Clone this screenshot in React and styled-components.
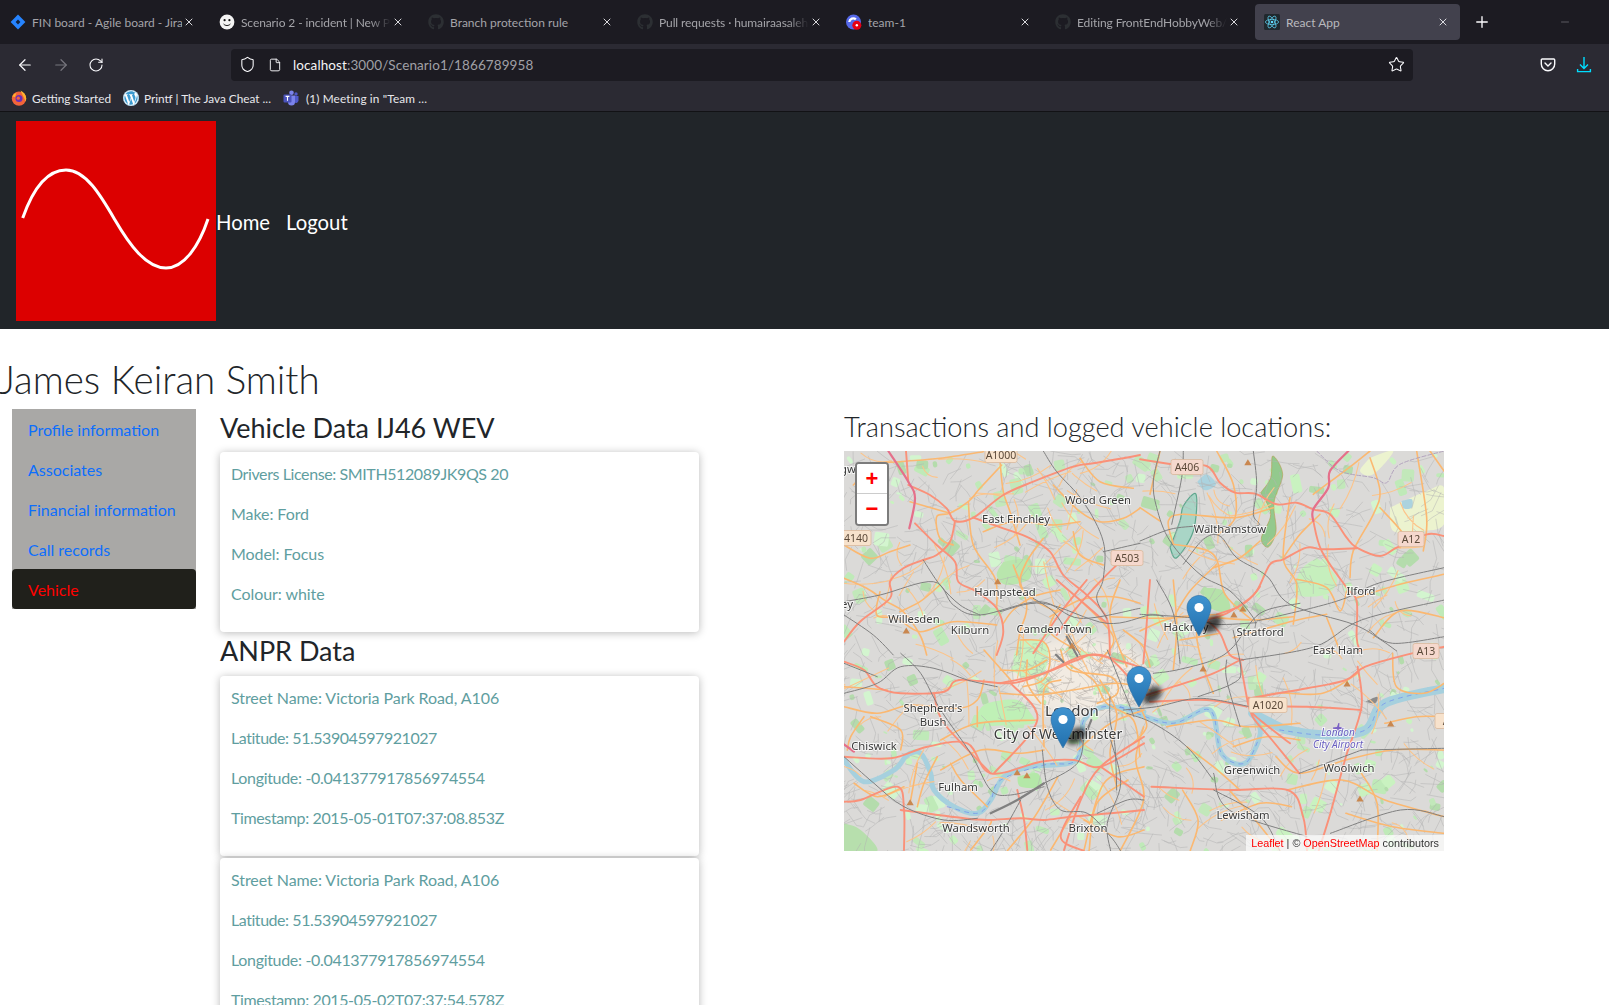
import React from "react";
import styled, { createGlobalStyle } from "styled-components";
import { ArrowLeft, ArrowRight, RotateCw, Shield, File, Star, Plus, X, Minus } from "lucide-react";
import { FaGithub, FaWordpress } from "react-icons/fa";

const UI = `Lato, "Open Sans", "Liberation Sans", sans-serif`;
const Global = createGlobalStyle`
  html, body { margin: 0; padding: 0; background: #fff; height: 100%; overflow: hidden; }
  * { box-sizing: border-box; }
  body { font-family: ${UI}; font-size: 16px; color: #212529; }
`;
const Page = styled.div`width: 1609px; height: 1005px; overflow: hidden;`;

/* ---------- browser chrome ---------- */
const TabStrip = styled.div`height: 44px; background: #1c1b22; display: flex; align-items: center; padding-left: 1px; gap: 4px;`;
const Tab = styled.div`
  width: 205px; height: 36px; border-radius: 4px; display: flex; align-items: center; padding: 0 8px 0 9px; flex: none;
  background: ${p => (p.$active ? "#42414d" : "transparent")};
`;
const TabIcon = styled.span`width: 16px; height: 16px; flex: none; display: flex; align-items: center; justify-content: center; margin-right: 6px;`;
const TabTitle = styled.span`
  flex: 1; min-width: 0; font-size: 12px; color: ${p => (p.$active ? "#b9b9be" : "#a4a4a9")}; white-space: nowrap; overflow: hidden;
  ${p => p.$fade && `letter-spacing: -0.1px; -webkit-mask-image: linear-gradient(to right, #000 86%, transparent 100%); mask-image: linear-gradient(to right, #000 86%, transparent 100%);`}
`;
const TabClose = styled.span`width: 14px; display: flex; justify-content: center; color: #eeeef2; flex: none; margin-right: 2px;`;
const NewTab = styled.span`margin-left: 9px; color: #fbfbfe; display: flex;`;
const WinControl = styled.span`margin-left: 64px; color: #9a9aa0; display: flex;`;

const Toolbar = styled.div`height: 41px; background: #2b2a33; display: flex; align-items: center; position: relative; padding-left: 16px;`;
const NavIcon = styled.span`width: 36px; display: flex; color: ${p => (p.$dim ? "#77767e" : "#fbfbfe")};`;
const UrlBar = styled.div`
  margin-left: 107px; width: 1182px; height: 32px; background: #1c1b22; border-radius: 4px; display: flex; align-items: center; padding: 0 8px 0 8px; color: #fbfbfe;
`;
const UrlIconSlot = styled.span`width: ${p => p.$w}px; display: flex; flex: none;`;
const UrlText = styled.span`flex: 1; font-size: 13.5px; color: #a0a0a6; letter-spacing: 0.1px;
  b { font-weight: 400; color: #f4f4f6; }`;
const ToolRight = styled.div`display: flex; align-items: center; gap: 20px; margin-left: 127px;`;

const Bookmarks = styled.div`height: 27px; background: #2b2a33; border-bottom: 1px solid #121215; display: flex; align-items: center; padding-left: 11px;`;
const Bookmark = styled.span`display: flex; align-items: center; color: #e8e8ec; font-size: 11.8px; gap: ${p => (p.$wide ? 7 : 5)}px; margin-right: 12px; white-space: nowrap; letter-spacing: ${p => (p.$wide ? "0.15px" : "0")};`;

/* ---------- app ---------- */
const NavBar = styled.nav`height: 217px; background: #212529; display: flex; align-items: center; padding: 0 16px;`;
const NavLink = styled.a`color: #fff; font-size: 20.3px; margin-right: 16px; margin-top: 2px;`;
const Title = styled.h1`margin: 0 0 0 -1px; height: 80px; padding-top: 26px; font-size: 38.5px; line-height: 48px; font-weight: 300; color: #212529; white-space: nowrap;`;
const Content = styled.div`display: flex; align-items: flex-start; padding-left: 12px;`;
const SideNav = styled.div`width: 184px; flex: none; background: #a9a8a6; display: flex; flex-direction: column;`;
const SideItem = styled.a`
  height: 40px; line-height: 42px; padding-left: 16px; font-size: 16px; border-radius: ${p => (p.$active ? "4px" : "0")};
  color: ${p => (p.$active ? "#ff0000" : "#0d6efd")}; background: ${p => (p.$active ? "#20201b" : "transparent")};
`;
const DataCol = styled.div`width: 479px; margin-left: 24px; flex: none; padding-top: 2px;`;
const SectionTitle = styled.h3`margin: 0; height: ${p => p.$h || 41}px; font-size: 27px; line-height: 34px; font-weight: 400; color: #212529; white-space: nowrap;`;
const Card = styled.div`background: #fff; border-radius: 4px; padding: 10px 11px; height: 180px; margin-bottom: 2px; box-shadow: 0 1px 9px rgba(0,0,0,.28);`;
const CardLine = styled.p`margin: 0 0 16px; height: 24px; line-height: 24px; color: #5f9ea0; font-size: 16px; letter-spacing: ${p => p.$ls ?? -0.07}px; white-space: nowrap;`;
const MapCol = styled.div`width: 600px; margin-left: 145px; flex: none;`;
const MapTitle = styled.h3`margin: 0; height: 42px; font-size: 27.2px; line-height: 36px; font-weight: 300; color: #212529; white-space: nowrap;`;
const MapFrame = styled.div`position: relative; width: 600px; height: 400px; overflow: hidden; background: #d8d7d5;`;
const ZoomBar = styled.div`position: absolute; left: 11px; top: 11px; width: 34px; border: 2px solid #7c7c7c; border-radius: 4px; background: #fff; overflow: hidden;`;
const ZoomBtn = styled.a`display: block; height: 30px; background: #fff; color: #f00; font: 700 22px/30px "Liberation Sans", sans-serif; text-align: center;
  ${p => p.$top && "border-bottom: 1px solid #ccc;"}`;
const Attribution = styled.div`position: absolute; right: 0; bottom: 0; background: rgba(255,255,255,.7); padding: 0 5px; font: 10.8px/16px "Liberation Sans", sans-serif; color: #333;
  a { color: #f00; }`;
const MapSvg = styled.svg`display: block; width: 600px; height: 400px;`;
const PlaceLabel = styled.text`
  font-family: "Noto Sans", "Open Sans", sans-serif; font-size: ${p => p.$s || 11.3}px; fill: #3a3a3a; text-anchor: middle; dominant-baseline: middle;
  paint-order: stroke; stroke: rgba(255,255,255,.75); stroke-width: 2px;
  ${p => p.$air && "fill:#6a5fc0; font-style: italic; font-size: 10px;"}
`;
const ShieldText = styled.text`font-family: "Noto Sans", "Open Sans", sans-serif; font-size: 10.5px; fill: #5a4838; text-anchor: middle; dominant-baseline: central;`;

/* ---------- map data: coordinates read from crops of the reference ---------- */
const A = ps => ps.map(([x, y]) => [x / 3 - 4, y / 3 - 6]);
const B = ps => ps.map(([x, y]) => [x / 3 + 156, y / 3 + 129]);
const C = ps => ps.map(([x, y]) => [x / 3 + 296, y / 3]);
const D = ps => ps.map(([x, y]) => [x / 3, y / 3 + 199]);
const E = ps => ps.map(([x, y]) => [(x - 10) / 2.57, (y - 33) / 3]);

const smooth = pts => {
  let d = `M${pts[0][0].toFixed(1)} ${pts[0][1].toFixed(1)}`;
  for (let i = 0; i < pts.length - 1; i++) {
    const p0 = pts[i - 1] || pts[i], p1 = pts[i], p2 = pts[i + 1], p3 = pts[i + 2] || p2;
    d += `C${(p1[0] + (p2[0] - p0[0]) / 6).toFixed(1)} ${(p1[1] + (p2[1] - p0[1]) / 6).toFixed(1)} ${(p2[0] - (p3[0] - p1[0]) / 6).toFixed(1)} ${(p2[1] - (p3[1] - p1[1]) / 6).toFixed(1)} ${p2[0].toFixed(1)} ${p2[1].toFixed(1)}`;
  }
  return d;
};

const SALMON = [
  A([[205,120],[270,150],[320,190],[345,228],[400,218],[490,150],[580,110],[700,65],[760,55],[850,40],[900,30]]),
  A([[198,18],[205,110]]),
  A([[345,228],[330,290],[290,330],[250,345],[190,370],[150,410],[150,460],[60,530],[12,590]]),
  A([[225,235],[290,300],[345,350],[355,410],[410,440],[470,490],[490,560],[470,630]]),
  A([[400,218],[490,250],[570,280],[630,320],[670,390],[740,450],[800,520],[810,630]]),
  A([[830,360],[780,410],[700,500],[650,570]]),
  B([[0,310],[130,280],[240,230],[320,230],[385,290]]),
  B([[440,345],[520,320],[640,280],[720,240]]),
  B([[450,365],[620,360],[740,380]]),
  B([[720,240],[740,350],[750,390],[780,420],[870,490]]),
  B([[620,120],[660,160],[690,225],[730,240]]),
  B([[620,120],[680,100],[750,55],[780,20]]),
  B([[450,0],[440,130],[430,250]]),
  B([[260,0],[180,100],[100,220]]),
  B([[170,0],[240,60],[320,130]]),
  C([[0,25],[100,40],[200,45],[240,95],[285,125],[345,128],[410,160],[470,155],[520,175],[570,190],[620,260],[650,290],[720,315],[770,290],[860,250],[912,255]]),
  C([[520,210],[545,300],[620,410],[650,450],[650,560],[660,600]]),
  C([[230,490],[300,465],[350,420],[390,340],[430,325],[500,290],[550,295],[650,292]]),
  D([[0,35],[60,60],[100,110],[170,130],[300,125],[345,90],[500,100],[600,70],[700,30],[760,15],[900,55]]),
  D([[0,320],[140,325],[250,290],[370,280],[440,370],[590,335],[690,330],[770,350],[900,280]]),
  D([[900,260],[770,350],[710,450],[660,600]]),
  D([[0,455],[50,450],[160,410],[180,480],[180,600]]),
  D([[170,480],[360,505],[430,510],[530,505],[600,510],[680,500],[800,490],[900,480]]),
  D([[500,100],[580,210],[450,370]]),
  D([[270,130],[300,220],[440,370]]),
  D([[520,420],[540,510],[550,600]]),
  D([[770,350],[900,440]]),
  D([[710,440],[650,560],[720,603]]),
  E([[1050,775],[1200,745],[1300,720],[1350,680],[1470,640],[1553,620]]),
  E([[1050,800],[1200,800],[1340,810]]),
  E([[800,1040],[1000,1050],[1150,1050],[1190,1130],[1200,1232]]),
  E([[1050,775],[1060,830],[1110,900],[1180,1000]]),
  E([[1330,680],[1340,800],[1300,950],[1260,1120],[1230,1232]]),
];
const ORANGE = [
  A([[480,50],[490,140],[510,200],[540,300]]), A([[385,170],[400,300],[465,400],[470,490]]),
  A([[210,170],[330,205]]), A([[485,60],[420,130],[385,170],[330,205],[290,215],[300,280],[340,300]]),
  A([[640,120],[720,200],[780,230],[850,220],[900,190]]), A([[700,260],[720,330],[790,360]]),
  A([[12,400],[80,430],[140,470],[190,500],[240,570],[260,630]]), A([[40,120],[100,60],[180,50],[300,40],[430,20]]),
  A([[610,280],[560,350],[540,420],[590,470],[650,500]]), A([[720,40],[780,110],[880,130]]),
  A([[430,260],[520,230],[640,240],[720,230]]), A([[12,300],[90,340],[150,320],[210,300]]),
  A([[120,440],[110,510],[170,520],[240,560],[340,530],[470,540]]), A([[520,360],[560,480],[540,560],[530,630]]),
  A([[300,420],[240,470],[180,500]]), A([[660,480],[630,560],[720,620]]),
  B([[330,110],[480,115],[600,110],[760,120],[880,110]]), B([[0,270],[80,270],[140,240]]),
  B([[60,180],[130,185],[150,240],[130,300],[70,320]]), B([[520,0],[530,140],[520,270]]),
  B([[600,110],[590,170],[610,260],[640,340]]), B([[370,150],[430,200],[450,260]]),
  B([[540,180],[600,170],[660,160]]), B([[0,340],[110,345],[220,330],[350,310],[450,330]]),
  B([[300,300],[350,400],[330,520],[350,620]]), B([[420,380],[440,440],[400,490]]),
  B([[500,440],[640,420],[740,440],[900,430]]), B([[700,500],[800,470],[900,480]]),
  B([[240,60],[340,170],[300,240]]), B([[150,110],[240,60],[340,50],[420,70]]),
  B([[360,0],[330,110],[380,260]]), B([[10,130],[40,90],[100,50],[180,30]]),
  B([[200,250],[280,300],[320,370],[400,420],[420,530]]), B([[560,500],[640,560],[720,630]]),
  C([[230,0],[280,100],[285,200],[235,250]]), C([[450,140],[430,320],[470,400],[460,520]]),
  C([[520,130],[640,40],[690,0]]), C([[690,20],[720,120],[700,190],[640,300],[630,380]]),
  C([[100,280],[85,210],[130,190],[285,200],[400,170]]), C([[100,280],[220,310],[255,430],[340,510]]),
  C([[0,540],[100,500],[250,490]]), C([[360,270],[300,320],[220,350]]), C([[470,385],[560,410],[600,480],[620,420]]),
  C([[650,440],[780,400],[912,370]]), C([[280,560],[460,510],[560,490]]), C([[700,560],[780,480],[912,500]]),
  C([[540,190],[480,250],[430,320]]), C([[30,130],[60,0]]), C([[0,170],[60,210]]), C([[720,170],[790,250],[780,290]]),
  C([[870,0],[912,60]]), C([[230,340],[150,420],[100,500]]), C([[560,500],[600,600]]), C([[850,300],[860,200],[830,0]]),
  D([[0,170],[100,190],[200,165],[340,175],[400,150],[420,90]]), D([[290,270],[400,220],[580,210]]),
  D([[290,360],[410,300],[520,310],[600,300]]), D([[200,450],[220,340]]), D([[320,340],[350,390],[430,470]]),
  D([[600,290],[600,120],[650,90]]), D([[60,200],[20,260],[10,300]]), D([[30,400],[100,440],[180,410]]),
  D([[700,300],[800,220],[900,180]]), D([[720,600],[780,400],[900,350]]), D([[550,30],[550,100],[590,160]]),
  D([[650,0],[680,60],[800,80],[820,130],[760,160]]), D([[420,0],[500,90]]), D([[400,170],[400,230]]),
  D([[0,110],[130,120]]), D([[80,200],[170,240],[170,300]]), D([[280,320],[240,400],[220,470]]),
  D([[380,600],[440,520],[430,510]]), D([[620,600],[680,500]]), D([[720,510],[820,560],[900,540]]),
  E([[780,860],[760,960],[780,1080],[720,1232]]), E([[880,1050],[920,1140],[900,1232]]),
  E([[1150,1050],[1290,1020],[1400,1080],[1553,1130]]), E([[1050,790],[1120,760],[1240,760],[1330,700]]),
  E([[1120,950],[1180,1000],[1300,960],[1420,930],[1553,930]]), E([[1400,850],[1480,830],[1553,830]]),
  E([[1340,1000],[1380,1090],[1380,1232]]), E([[1000,1050],[1060,1130],[1130,1232]]),
  E([[1420,640],[1430,740],[1500,760],[1553,730]]), E([[1300,1120],[1420,1160],[1553,1180]]),
  E([[980,1140],[1080,1090],[1160,1100]]), E([[640,1232],[660,1090],[740,1020]]), E([[430,1232],[500,1130],[560,1010]]),
];
const RAIL = [
  A([[610,18],[650,80],[730,170],[790,290],[790,400],[770,460],[800,520]]),
  A([[12,470],[120,450],[280,410],[340,480],[420,510],[600,470],[720,520],[900,490]]),
  A([[790,320],[900,295]]), A([[580,460],[640,500],[680,560],[720,630]]), A([[12,510],[100,570],[160,630]]),
  A([[250,345],[300,420],[360,480],[420,510]]),
  B([[0,95],[130,70],[320,130],[450,105],[490,110]]), B([[460,280],[530,270],[640,240],[700,200],[780,100],[900,70]]),
  B([[370,390],[470,380],[600,355],[750,380]]), B([[380,400],[460,430],[560,500],[640,600]]),
  B([[470,0],[520,100],[540,250]]), B([[330,350],[330,420],[345,500],[350,630]]), B([[680,240],[680,300],[720,440]]),
  C([[60,0],[40,90],[50,170],[90,270],[180,370],[270,420],[340,500],[345,530]]), C([[130,0],[125,80],[95,220]]),
  C([[0,270],[90,235],[170,225]]), C([[340,0],[350,100],[340,190],[350,225],[200,225]]),
  C([[130,340],[190,265],[240,255],[290,320],[380,375],[450,460],[640,520],[720,565],[770,600]]),
  C([[350,510],[520,470],[620,440],[720,395],[912,350]]), C([[0,490],[150,500],[230,520],[350,515]]),
  D([[0,130],[100,100],[170,50],[270,55],[370,90],[460,110]]), D([[170,10],[230,70],[290,180],[380,310],[440,420],[500,435],[600,410]]),
  D([[595,300],[610,410],[650,480],[730,490],[800,560],[830,603]]), D([[800,270],[830,400],[790,520],[800,603]]),
  D([[760,490],[850,450],[900,450]]), D([[440,603],[480,540],[530,450]]), D([[790,0],[870,200]]),
  D([[0,40],[100,80]]), D([[0,320],[90,400],[180,470],[300,510],[400,505]]),
  D([[600,400],[700,340],[720,250]]),
  E([[1030,660],[1220,620],[1340,540],[1553,480]]), E([[1360,570],[1420,610],[1553,590]]), E([[1340,930],[1553,925]]),
  E([[960,1000],[1000,1110],[1200,1190]]), E([[1010,570],[1030,690],[1010,730],[920,770]]), E([[1180,1000],[1340,930]]),
  E([[1130,1232],[1080,1130],[960,1050]]), E([[1260,1180],[1440,1110],[1553,1130]]),
];
const THICK = [
  D([[440,490],[520,450],[600,400]]),
  D([[730,240],[742,210]]),
  B([[200,170],[232,228]]), B([[168,224],[190,246]]),
];
const THAMES = [
  D([[0,330],[60,395],[150,360],[190,315],[230,310],[260,370],[270,420],[330,470],[400,490],[440,450],[480,380],[560,350],[690,335],[715,260],[720,210],[780,170],[900,185]]),
  E([[720,800],[850,850],[950,810],[980,940],[1040,970],[1080,880],[1060,820]]),
];
const THAMES_WIDE = [E([[1060,820],[1110,850],[1150,870],[1250,885],[1350,870],[1400,790],[1553,745]])];
const BLUE_DASH = [
  D([[310,470],[400,490],[440,450],[470,390],[600,345],[690,335],[715,260],[720,210],[780,170],[900,185]]),
  E([[720,800],[850,850],[950,810],[980,940],[1040,970],[1075,900]]),
  E([[1130,870],[1240,885],[1350,870],[1400,790],[1553,745]]),
];
const PEAKS = [[405,425],[170,573],[596,618],[933,687],[1012,525],[1035,507],[1303,732],[1415,852],[455,998],[480,1007],[180,1088],[1336,1077],[1048,68]]
  .map(([x, y]) => E([[x, y]])[0]);
const LABELS = [
  ["Wood Green",254,50],["East Finchley",172,69],["Walthamstow",386,79],["Hampstead",161,142],["Ilford",517,141],
  ["Willesden",70,169],["Kilburn",126,180],["Camden Town",210,179],["Hackney",342,177],["Stratford",416,182],["East Ham",494,200],
  ["Shepherd's",89,258],["Bush",89,272],["Chiswick",30,296],["Greenwich",408,320],["Woolwich",505,318],["Fulham",114,337],
  ["Lewisham",399,365],["Wandsworth",132,378],["Brixton",244,378],["ey",3,154],["gw",4,19],
];
const SHIELDS = [["A1000",157,4,32,"#f7e2cc"],["A406",343,16,32,"#f5d8cd"],["4140",12,87,30,"#f7e2cc"],["A12",567,88,26,"#f5d8cd"],["A503",283,107,32,"#f5d8cd"],["A13",582,200,26,"#f5d8cd"],["A1020",424,254,38,"#f7e2cc"],["A",602,270,22,"#f7e2cc"]];
const PINS = [[355,185],[295,256],[219,297]];

const rng = (s => () => { s |= 0; s = s + 0x6d2b79f5 | 0; let t = Math.imul(s ^ s >>> 15, 1 | s); t = t + Math.imul(t ^ t >>> 7, 61 | t) ^ t; return ((t ^ t >>> 14) >>> 0) / 4294967296; })(1866789958);

const patches = Array.from({ length: 420 }, () => {
  const x = rng() * 600, y = rng() * 400, r = 3 + rng() * 9, a = rng() * 90;
  const c = ["#c9f2c0", "#bfeab8", "#d3f5cf", "#b4dcac", "#c2e8ba"][Math.floor(rng() * 5)];
  return { x, y, w: r * (0.7 + rng()), h: r * (0.5 + rng() * 0.7), a, c };
});
const streets = Array.from({ length: 1300 }, () => {
  const x = rng() * 600, y = rng() * 400, a = rng() * Math.PI, l = 6 + rng() * 16;
  const a2 = a + (rng() - 0.5) * 1.6, l2 = 4 + rng() * 10;
  const x1 = x + Math.cos(a) * l, y1 = y + Math.sin(a) * l;
  return `M${x.toFixed(1)} ${y.toFixed(1)}L${x1.toFixed(1)} ${y1.toFixed(1)}L${(x1 + Math.cos(a2) * l2).toFixed(1)} ${(y1 + Math.sin(a2) * l2).toFixed(1)}`;
}).join("");
const cityStreets = Array.from({ length: 260 }, () => {
  const x = 170 + rng() * 130, y = 190 + rng() * 70, a = rng() * Math.PI, l = 4 + rng() * 10;
  return `M${x.toFixed(1)} ${y.toFixed(1)}L${(x + Math.cos(a) * l).toFixed(1)} ${(y + Math.sin(a) * l).toFixed(1)}`;
}).join("");
const minorOrange = Array.from({ length: 130 }, () => {
  const x = rng() * 600, y = rng() * 400, a = rng() * Math.PI * 2, l = 18 + rng() * 34;
  const bend = (rng() - 0.5) * 18;
  const mx = x + Math.cos(a) * l / 2 - Math.sin(a) * bend, my = y + Math.sin(a) * l / 2 + Math.cos(a) * bend;
  return `M${x.toFixed(1)} ${y.toFixed(1)}Q${mx.toFixed(1)} ${my.toFixed(1)} ${(x + Math.cos(a) * l).toFixed(1)} ${(y + Math.sin(a) * l).toFixed(1)}`;
}).join("");

const Lines = ({ list, color, w, ...rest }) => (
  <g fill="none" stroke={color} strokeWidth={w} strokeLinecap="round" strokeLinejoin="round" {...rest}>
    {list.map((p, i) => <path key={i} d={smooth(p)} />)}
  </g>
);

const Pin = ({ x, y }) => (
  <g transform={`translate(${x - 12.5} ${y - 41})`}>
    <path d="M12.5 0.5C5.9 0.5 0.5 5.9 0.5 12.5 0.5 21 12.5 41 12.5 41S24.5 21 24.5 12.5C24.5 5.9 19.1 0.5 12.5 0.5Z" fill="url(#pinFill)" stroke="#2a6ca3" strokeWidth="0.6" />
    <circle cx="12.5" cy="12.5" r="4.6" fill="#fff" />
  </g>
);

const LondonMap = () => (
  <MapSvg viewBox="0 0 600 400">
    <defs>
      <linearGradient id="pinFill" x1="0" y1="0" x2="0" y2="1">
        <stop offset="0" stopColor="#3f93d0" /><stop offset="1" stopColor="#2270ad" />
      </linearGradient>
      <filter id="soft"><feGaussianBlur stdDeviation="0.28" /></filter>
      <filter id="shadow" x="-80%" y="-80%" width="260%" height="260%"><feGaussianBlur stdDeviation="2.8" /></filter>
      <filter id="soft2"><feGaussianBlur stdDeviation="6" /></filter>
    </defs>
    <rect width="600" height="400" fill="#dbdad8" />
    <ellipse cx="235" cy="225" rx="70" ry="40" fill="#f2ebe2" filter="url(#soft2)" />
    <g filter="url(#soft)">
      {patches.map((p, i) => <rect key={i} x={p.x} y={p.y} width={p.w} height={p.h} rx="2" fill={p.c} transform={`rotate(${p.a} ${p.x} ${p.y})`} />)}
      <path d={smooth(D([[400,190],[430,160],[520,150],[560,190],[570,220],[500,225],[420,225],[400,190]]))} fill="#bff0b6" />
      <path d={smooth(D([[520,380],[580,370],[590,410],[530,410],[520,380]]))} fill="#b4e8a8" />
      <path d={smooth(B([[60,180],[130,185],[145,235],[120,290],[60,290],[40,240],[60,180]]))} fill="#c8f3bf" />
      <path d={smooth(A([[490,350],[560,345],[570,400],[500,420],[470,390],[490,350]]))} fill="#b9e6ad" />
      <path d={smooth(C([[190,410],[250,420],[270,480],[210,470],[190,410]]))} fill="#b5e2a9" />
      <path d={smooth(C([[530,320],[590,380],[560,430],[470,430],[480,360],[530,320]]))} fill="#c6efbd" />
      <path d={smooth(C([[750,170],[860,120],[912,110],[912,220],[840,240],[760,240],[750,170]]))} fill="#ecf3cf" />
      <path d={smooth(C([[690,20],[760,0],[700,70],[660,60],[690,20]]))} fill="#ecf3cf" />
      <path d={smooth(D([[0,520],[50,540],[100,603],[0,603],[0,520]]))} fill="#b7dfad" />
      <path d={smooth(C([[362,125],[392,80],[398,15],[428,70],[402,155],[408,240],[385,288],[364,262],[392,190],[362,125]]))} fill="#93c98d" stroke="#b59c4e" strokeWidth="0.6" />
      <path d={smooth(C([[90,290],[120,210],[130,165],[168,130],[160,240],[110,320],[90,290]]))} fill="#a9d5c6" stroke="#5fa68d" strokeWidth="1.2" />
      <path d={smooth(C([[172,92],[200,70],[228,100],[195,118],[172,92]]))} fill="#abd3df" />
      <path d={smooth(C([[785,150],[815,145],[815,170],[790,172],[785,150]]))} fill="#abd3df" />
      <path d={smooth(E([[1350,785],[1380,770],[1375,790],[1350,785]]))} fill="#8c8c8c" />
      <path d={streets} stroke="#b2b2b2" strokeWidth="0.5" fill="none" />
      <path d={cityStreets} stroke="#b0aaa3" strokeWidth="0.45" fill="none" />
      <Lines list={THAMES} color="#a6d0de" w={5} />
      <Lines list={THAMES_WIDE} color="#a6d0de" w={9} />
      <Lines list={BLUE_DASH} color="#7394ee" w={0.8} strokeDasharray="4 5" />
      <path d={minorOrange} stroke="#fcc48a" strokeWidth="1.1" fill="none" strokeLinecap="round" />
      <Lines list={ORANGE} color="#fbb871" w={1.6} />
      <Lines list={SALMON} color="#fa9179" w={1.9} />
      <Lines list={RAIL} color="#808080" w={1} />
      <Lines list={THICK} color="#808080" w={2.2} />
      <Lines list={[C([[625,0],[570,60],[565,110],[520,175],[520,210]]), A([[145,18],[205,110],[225,160],[208,250]]), D([[0,283],[30,305]])]} color="#e56f8a" w={2.2} />
      <Lines list={[C([[530,0],[600,60],[700,80],[740,95],[780,40],[912,0]])]} color="#b2a3bd" w={1} strokeDasharray="4 2" />
      <g fill="#c9874f">
        {PEAKS.map(([x, y], i) => <path key={i} d={`M${x} ${y - 3.5}L${x + 3.6} ${y + 2.5}L${x - 3.6} ${y + 2.5}Z`} />)}
      </g>
      <path d="M490 279l1.4 -4 1-.0 -.2 4 5 .6 0 1.2 -5 .4 .2 4 -1 0 -1.4-4 -4 -.4 0-1.4Z" fill="#7a60c4" transform="translate(3 -3)" />
      <PlaceLabel x="214" y="284" $s={14}>City of Westminster</PlaceLabel>
      <PlaceLabel x="228" y="261" $s={15}>London</PlaceLabel>
      {LABELS.map(([t, x, y]) => <PlaceLabel key={t} x={x} y={y}>{t}</PlaceLabel>)}
      <PlaceLabel x="494" y="282" $air>London</PlaceLabel>
      <PlaceLabel x="494" y="294" $air>City Airport</PlaceLabel>
      {SHIELDS.map(([t, x, y, w, c]) => (
        <g key={t}>
          <rect x={x - w / 2} y={y - 7.5} width={w} height={15} rx="2" fill={c} stroke="#d9b99c" strokeWidth="0.8" />
          <ShieldText x={x} y={y}>{t}</ShieldText>
        </g>
      ))}
    </g>
    {PINS.map(([x, y], i) => (
      <ellipse key={i} cx={x + 13} cy={y - 12} rx="11" ry="7" transform={`rotate(-38 ${x + 13} ${y - 12})`} fill="#000" opacity=".7" filter="url(#shadow)" />
    ))}
    {PINS.map(([x, y], i) => <Pin key={i} x={x} y={y} />)}
  </MapSvg>
);

/* ---------- favicons ---------- */
const JiraIcon = () => (
  <svg width="16" height="16" viewBox="0 0 16 16"><path d="M8 0.6L15.4 8 8 15.4 0.6 8Z" fill="#2684ff" /><path d="M8 5.6L10.4 8 8 10.4 5.6 8Z" fill="#12233f" /></svg>
);
const Smiley = () => (
  <svg width="16" height="16" viewBox="0 0 16 16"><circle cx="8" cy="8" r="7.4" fill="#f4f4f4" /><circle cx="5.6" cy="6.2" r="1.1" fill="#111" /><circle cx="10.4" cy="6.2" r="1.1" fill="#111" /><path d="M4.6 10c1.8 2 5 2 6.8 0" stroke="#111" strokeWidth="1" fill="none" /></svg>
);
const TeamIcon = () => (
  <svg width="17" height="17" viewBox="0 0 17 17"><circle cx="8" cy="8" r="8" fill="#5568e8" /><path d="M3.5 8a4.2 4.2 0 0 1 7-2.8" stroke="#fff" strokeWidth="2.4" fill="none" /><circle cx="11.5" cy="11.5" r="4.8" fill="#e60012" /><circle cx="11.5" cy="11.5" r="1.3" fill="#fff" /></svg>
);
const ReactIcon = () => (
  <svg width="16" height="16" viewBox="0 0 16 16"><rect width="16" height="16" rx="1.5" fill="#20282d" /><g fill="none" stroke="#61dafb" strokeWidth=".7"><ellipse cx="8" cy="8" rx="6.6" ry="2.6" /><ellipse cx="8" cy="8" rx="6.6" ry="2.6" transform="rotate(60 8 8)" /><ellipse cx="8" cy="8" rx="6.6" ry="2.6" transform="rotate(120 8 8)" /></g><circle cx="8" cy="8" r="1.3" fill="#61dafb" /></svg>
);
const FirefoxIcon = () => (
  <svg width="16" height="16" viewBox="0 0 16 16"><circle cx="8" cy="8.6" r="7.2" fill="#f2643a" /><path d="M9.5 0.5c3.5 1.6 5.7 4.6 5.7 8.1 0 1-.2 2-.6 2.8-1.2-3.2-3-6-5.1-10.9Z" fill="#ffb42e" /><path d="M1.4 6.4c1-2 2.6-3 4-3.4L4 7Z" fill="#ffb42e" /><circle cx="8" cy="8.6" r="3.5" fill="#6a2fb8" /><circle cx="7.3" cy="8.2" r="1.6" fill="#f2643a" /></svg>
);
const WpBadge = styled.span`width: 16px; height: 16px; border-radius: 8px; background: #fff; display: flex;`;
const WpIcon = () => <WpBadge><FaWordpress size={16} color="#3b9ad0" /></WpBadge>;
const TeamsIcon = () => (
  <svg width="16" height="16" viewBox="0 0 16 16"><circle cx="8.5" cy="2.8" r="2.3" fill="#7b83eb" /><circle cx="13" cy="4" r="1.7" fill="#5059c9" /><path d="M10 6h5.5v4.5a2.6 2.6 0 0 1-4 2Z" fill="#5059c9" /><path d="M5 5.5h7v6.5a3.5 3.5 0 0 1-7 0Z" fill="#7b83eb" /><rect x="0.5" y="4.5" width="8" height="8" rx="1" fill="#4b53bc" /><path d="M2.6 6.4h3.8M4.5 6.4v4.4" stroke="#fff" strokeWidth="1.1" /></svg>
);
const GitHubIcon = () => <FaGithub size={16} color="#2c2f33" />;
const PocketIcon = () => (
  <svg width="16" height="16" viewBox="0 0 16 16" fill="none" stroke="#fbfbfe" strokeWidth="1.4"><path d="M2.2 2h11.6c.5 0 .9.4.9.9v4.2a6.7 6.7 0 0 1-13.4 0V2.9c0-.5.4-.9.9-.9Z" /><path d="M5 6l3 3 3-3" strokeLinecap="round" /></svg>
);
const DownloadIcon = () => (
  <svg width="16" height="18" viewBox="0 0 16 18" fill="none" stroke="#00ddff" strokeWidth="1.4"><path d="M8 1v11M4 8.4l4 4 4-4" /><path d="M1.6 13v2.6h12.8V13" /></svg>
);

const TABS = [
  { icon: <JiraIcon />, title: "FIN board - Agile board - Jira" },
  { icon: <Smiley />, title: "Scenario 2 - incident | New P", fade: true },
  { icon: <GitHubIcon />, title: "Branch protection rule" },
  { icon: <GitHubIcon />, title: "Pull requests · humairaasaleh", fade: true },
  { icon: <TeamIcon />, title: "team-1" },
  { icon: <GitHubIcon />, title: "Editing FrontEndHobbyWeb/", fade: true },
  { icon: <ReactIcon />, title: "React App", active: true },
];
/* Lato's digits are wider than the reference's, so digit-heavy lines carry a tighter tracking */
const VEHICLE = [["Drivers License: SMITH512089JK9QS 20", -0.4], ["Make: Ford"], ["Model: Focus"], ["Colour: white"]];
const ANPR = [
  [["Street Name: Victoria Park Road, A106"], ["Latitude: 51.53904597921027", -0.45], ["Longitude: -0.041377917856974554", -0.32], ["Timestamp: 2015-05-01T07:37:08.853Z", -0.38]],
  [["Street Name: Victoria Park Road, A106"], ["Latitude: 51.53904597921027", -0.45], ["Longitude: -0.041377917856974554", -0.32], ["Timestamp: 2015-05-02T07:37:54.578Z", -0.38]],
];
const SIDE = ["Profile information", "Associates", "Financial information", "Call records", "Vehicle"];

export default function App() {
  return (
    <Page>
      <Global />
      <TabStrip>
        {TABS.map(t => (
          <Tab key={t.title} $active={t.active}>
            <TabIcon>{t.icon}</TabIcon>
            <TabTitle $active={t.active} $fade={t.fade}>{t.title}</TabTitle>
            <TabClose><X size={12} strokeWidth={1.8} /></TabClose>
          </Tab>
        ))}
        <NewTab><Plus size={18} strokeWidth={1.8} /></NewTab>
        <WinControl><Minus size={12} strokeWidth={1} /></WinControl>
      </TabStrip>
      <Toolbar>
        <NavIcon><ArrowLeft size={18} strokeWidth={1.6} /></NavIcon>
        <NavIcon $dim><ArrowRight size={18} strokeWidth={1.6} /></NavIcon>
        <NavIcon><RotateCw size={16} strokeWidth={1.6} /></NavIcon>
        <UrlBar>
          <UrlIconSlot $w={29}><Shield size={17} strokeWidth={1.5} /></UrlIconSlot>
          <UrlIconSlot $w={25}><File size={14} strokeWidth={1.6} /></UrlIconSlot>
          <UrlText><b>localhost</b>:3000/Scenario1/1866789958</UrlText>
          <Star size={17} strokeWidth={1.5} />
        </UrlBar>
        <ToolRight><PocketIcon /><DownloadIcon /></ToolRight>
      </Toolbar>
      <Bookmarks>
        <Bookmark><FirefoxIcon />Getting Started</Bookmark>
        <Bookmark><WpIcon />Printf | The Java Cheat ...</Bookmark>
        <Bookmark $wide><TeamsIcon />(1) Meeting in "Team ...</Bookmark>
      </Bookmarks>
      <NavBar>
        <svg width="200" height="200" viewBox="0 0 200 200">
          <rect width="200" height="200" fill="#dc0000" />
          <path d="M6.7 97C18 65 33 49 50 49C70 49 85 75 99 99C113 123 130 147 150 147C168 147 183 125 192 98" fill="none" stroke="#fff" strokeWidth="3" />
        </svg>
        <NavLink>Home</NavLink>
        <NavLink>Logout</NavLink>
      </NavBar>
      <Title>James Keiran Smith</Title>
      <Content>
        <SideNav>
          {SIDE.map(s => <SideItem key={s} $active={s === "Vehicle"}>{s}</SideItem>)}
        </SideNav>
        <DataCol>
          <SectionTitle>Vehicle Data IJ46 WEV</SectionTitle>
          <Card>{VEHICLE.map(([l, ls]) => <CardLine key={l} $ls={ls}>{l}</CardLine>)}</Card>
          <SectionTitle $h={42}>ANPR Data</SectionTitle>
          {ANPR.map((c, i) => <Card key={i}>{c.map(([l, ls]) => <CardLine key={l} $ls={ls}>{l}</CardLine>)}</Card>)}
        </DataCol>
        <MapCol>
          <MapTitle>Transactions and logged vehicle locations:</MapTitle>
          <MapFrame>
            <LondonMap />
            <ZoomBar>
              <ZoomBtn $top>+</ZoomBtn>
              <ZoomBtn>−</ZoomBtn>
            </ZoomBar>
            <Attribution><a>Leaflet</a> | © <a>OpenStreetMap</a> contributors</Attribution>
          </MapFrame>
        </MapCol>
      </Content>
    </Page>
  );
}
